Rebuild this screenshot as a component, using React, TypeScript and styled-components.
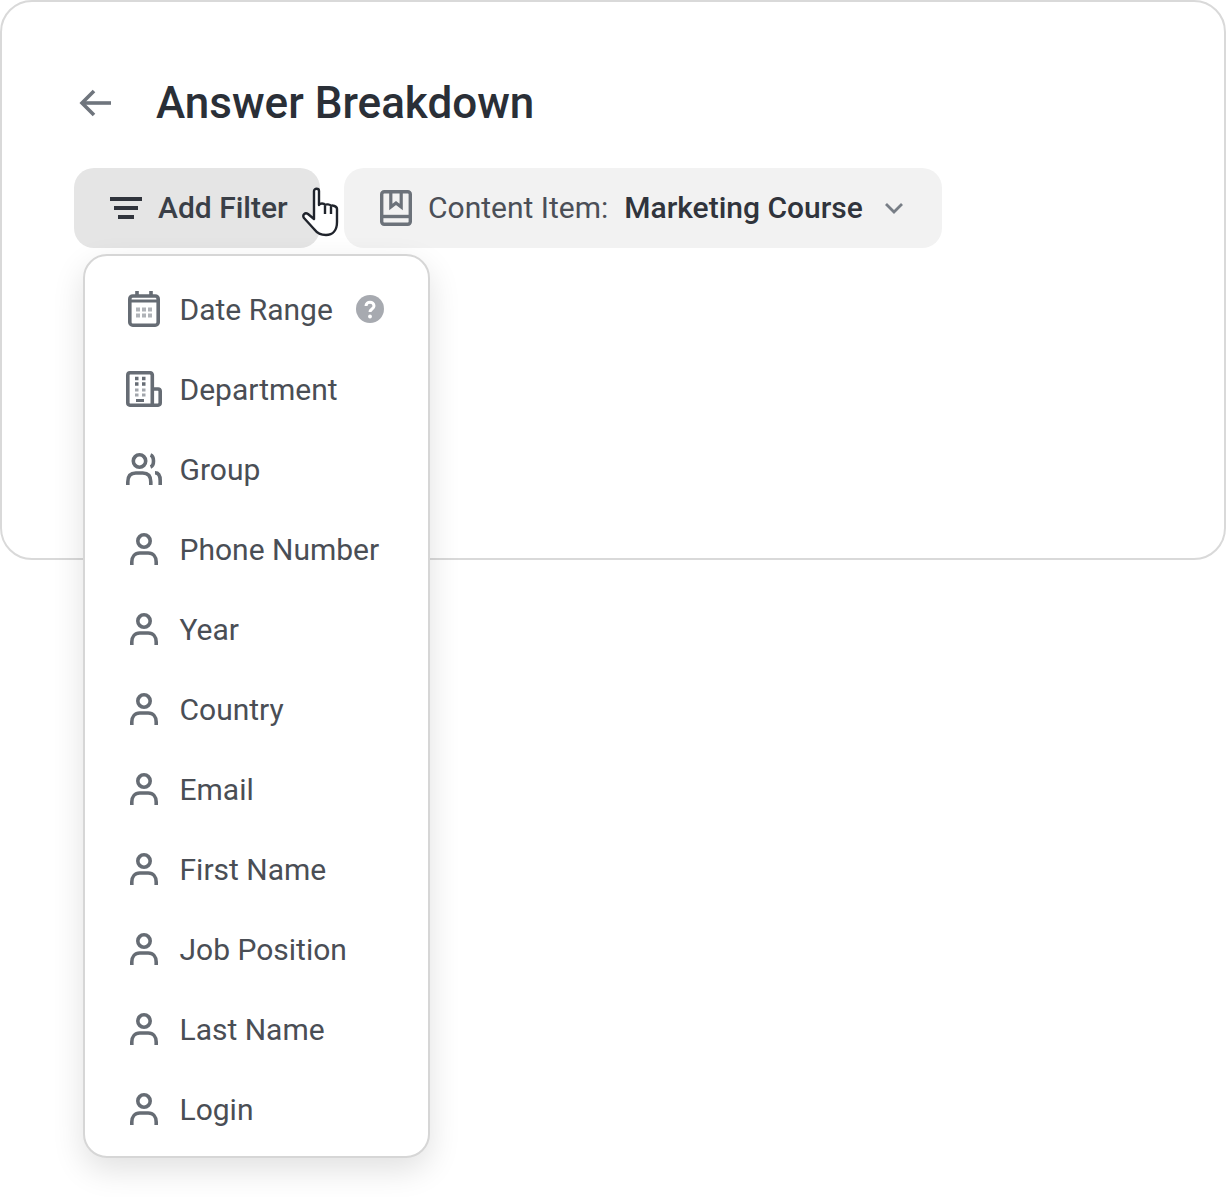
import styled, { createGlobalStyle } from "styled-components";

const GlobalStyle = createGlobalStyle`
  html, body {
    margin: 0;
    background: #fff;
    font-family: Roboto, "Liberation Sans", sans-serif;
  }
`;

const Page = styled.div`
  width: 1226px;
  height: 1197px;
  position: relative;
  overflow: hidden;
`;

const Card = styled.section`
  box-sizing: border-box;
  width: 1226px;
  height: 560px;
  border: 2px solid #d9d9d9;
  border-radius: 32px;
  padding: 76px 72px 0;
`;

const TitleRow = styled.div`
  display: flex;
  align-items: center;
  height: 50px;
  gap: 42px;
  margin-bottom: 40px;
  padding-left: 4px;
`;

const Title = styled.h1`
  margin: 0;
  font-size: 44px;
  line-height: 50px;
  font-weight: 500;
  color: #2a2f37;
`;

const Toolbar = styled.div`
  display: flex;
  gap: 24px;
`;

const Chip = styled.button<{ $active?: boolean }>`
  display: flex;
  align-items: center;
  height: 80px;
  border: 0;
  border-radius: 20px;
  font: inherit;
  font-size: 30px;
  line-height: 78px;
  cursor: pointer;
  color: #3a3f47;
  background: ${(p) => (p.$active ? "#e5e5e5" : "#f2f2f2")};
`;

const FilterChip = styled(Chip)`
  width: 246px;
  padding: 0 0 0 36px;
  gap: 16px;
  font-weight: 500;
`;

const ContentChip = styled(Chip)`
  width: 598px;
  padding: 0 0 0 36px;
`;

const ChipLabel = styled.span`
  margin-left: 16px;
  color: #4b4f57;
`;

const ChipValue = styled.span`
  margin-left: 16px;
  font-weight: 500;
  color: #30343c;
`;

const Caret = styled.span`
  display: flex;
  margin-left: 21px;
`;

const Cursor = styled.svg`
  position: absolute;
  left: 301px;
  top: 187px;
`;

const Menu = styled.ul`
  position: absolute;
  left: 83px;
  top: 254px;
  box-sizing: border-box;
  width: 347px;
  height: 904px;
  margin: 0;
  padding: 13px 0 0;
  list-style: none;
  background: #fff;
  border: 2px solid #d6d6d6;
  border-radius: 24px;
  box-shadow: 0 12px 32px rgba(0, 0, 0, 0.12);
`;

const MenuItem = styled.li`
  display: flex;
  align-items: center;
  height: 80px;
  padding-left: 41px;
  font-size: 30px;
  color: #4a4e55;
`;

const IconSlot = styled.span`
  display: flex;
  justify-content: center;
  width: 36px;
  margin-right: 17.5px;
`;

const HelpBadge = styled.span`
  display: flex;
  margin-left: 23px;
`;

const ArrowIcon = () => (
  <svg width="36" height="36" viewBox="0 0 36 36" fill="none" stroke="#6f757d" strokeWidth="3.6">
    <path d="M33 18H4" />
    <path d="M16 6 4 18l12 12" />
  </svg>
);

const FilterIcon = () => (
  <svg width="32" height="24" viewBox="0 0 32 24" fill="#30343c">
    <rect x="0" y="1" width="32" height="4" />
    <rect x="4" y="10" width="24" height="4" />
    <rect x="8" y="19" width="16" height="4" />
  </svg>
);

const BookIcon = () => (
  <svg width="32" height="36" viewBox="0 0 32 36" fill="none" stroke="#6c727a" strokeWidth="3.4">
    <rect x="1.7" y="1.700" width="28.600" height="32.600" rx="2.500" />
    <path d="M2 26.500h28" />
    <path d="M10.800 2v15l5.200-4 5.200 4V2" strokeWidth="3.200" />
  </svg>
);

const ChevronIcon = () => (
  <svg width="20" height="12" viewBox="0 0 20 12" fill="none" stroke="#787e86" strokeWidth="2.8">
    <path d="m2 2 8 8 8-8" />
  </svg>
);

const HandCursor = () => (
  <Cursor width="40" height="52" viewBox="0 0 40 52" fill="#fff" stroke="#20242c" strokeWidth="2.4" strokeLinejoin="round">
    <path d="M13 4c0-3 5-3 5 0v14c1-2 5-2 6 0 1-1 5-1 6 1 1-1 6 0 6 3v13c0 8-4 13-11 13-6 0-9-2-12-6L3 31c-2-3 1-6 4-4l6 5z" />
    <path d="M24 19v8M30 20v7" fill="none" />
  </Cursor>
);

const CalendarIcon = () => (
  <svg width="32" height="36" viewBox="0 0 32 36" fill="none" stroke="#666c74" strokeWidth="3.6">
    <rect x="1.800" y="5" width="28.400" height="29.200" rx="3" />
    <path d="M2 10h28" strokeWidth="3" />
    <path d="M9 0v5M23 0v5" />
    <path d="M8 18.500h16M8 24.500h16" stroke="#b0b3b8" strokeWidth="4" strokeDasharray="4 2" />
  </svg>
);

const BuildingIcon = () => (
  <svg width="36" height="36" viewBox="0 0 36 36" fill="none" stroke="#666c74" strokeWidth="3.6">
    <path d="M4 1.800h20a2.500 2.500 0 0 1 2.300 2.200v30.200H4A2.300 2.300 0 0 1 1.800 32V4A2.300 2.300 0 0 1 4 1.800z" />
    <path d="M26.500 18H32a2.300 2.300 0 0 1 2.200 2.200V32a2.300 2.300 0 0 1-2.200 2.200h-5.500" />
    <path d="M9 7.500h3.500M16 7.500h3.500M9 13h3.500M16 13h3.500" strokeWidth="3.400" />
    <path d="M9 19h3.500M16 19h3.500M9 24h3.500M16 24h3.500" stroke="#a2a6ac" strokeWidth="3" />
    <path d="M10 29.500h8" strokeWidth="3" />
  </svg>
);

const GroupIcon = () => (
  <svg width="36" height="32" viewBox="0 0 36 32" fill="none" stroke="#666c74" strokeWidth="3.6">
    <circle cx="13.500" cy="8" r="6.200" />
    <path d="M24.500 2c4 1.500 4 10.500 0 12" />
    <path d="M1.800 32v-3c0-6 3-9 8-9h7c5 0 8 3 8 9v3" />
    <path d="M29 19.800c3.500 0 5.200 3 5.200 8V32" />
  </svg>
);

const PersonIcon = () => (
  <svg width="28" height="32" viewBox="0 0 28 32" fill="none" stroke="#666c74" strokeWidth="3.6">
    <circle cx="14" cy="8" r="6.200" />
    <path d="M1.800 32v-3c0-5 3-9 8-9h8.400c5 0 8 4 8 9v3" />
  </svg>
);

const HelpIcon = () => (
  <svg width="28" height="28" viewBox="0 0 28 28">
    <circle cx="14" cy="14" r="14" fill="#a7aab0" />
    <path d="M10 11c0-5 8-5 8 0 0 3-4 3-4 6" fill="none" stroke="#fff" strokeWidth="3" />
    <circle cx="14" cy="21.500" r="1.900" fill="#fff" />
  </svg>
);

const personFields = [
  "Phone Number",
  "Year",
  "Country",
  "Email",
  "First Name",
  "Job Position",
  "Last Name",
  "Login",
];

export default function App() {
  return (
    <Page>
      <GlobalStyle />
      <Card>
        <TitleRow>
          <ArrowIcon />
          <Title>Answer Breakdown</Title>
        </TitleRow>
        <Toolbar>
          <FilterChip $active>
            <FilterIcon />
            Add Filter
          </FilterChip>
          <ContentChip>
            <BookIcon />
            <ChipLabel>Content Item:</ChipLabel>
            <ChipValue>Marketing Course</ChipValue>
            <Caret>
              <ChevronIcon />
            </Caret>
          </ContentChip>
        </Toolbar>
      </Card>
      <HandCursor />
      <Menu>
        <MenuItem>
          <IconSlot><CalendarIcon /></IconSlot>
          Date Range
          <HelpBadge><HelpIcon /></HelpBadge>
        </MenuItem>
        <MenuItem>
          <IconSlot><BuildingIcon /></IconSlot>
          Department
        </MenuItem>
        <MenuItem>
          <IconSlot><GroupIcon /></IconSlot>
          Group
        </MenuItem>
        {personFields.map((field) => (
          <MenuItem key={field}>
            <IconSlot><PersonIcon /></IconSlot>
            {field}
          </MenuItem>
        ))}
      </Menu>
    </Page>
  );
}
